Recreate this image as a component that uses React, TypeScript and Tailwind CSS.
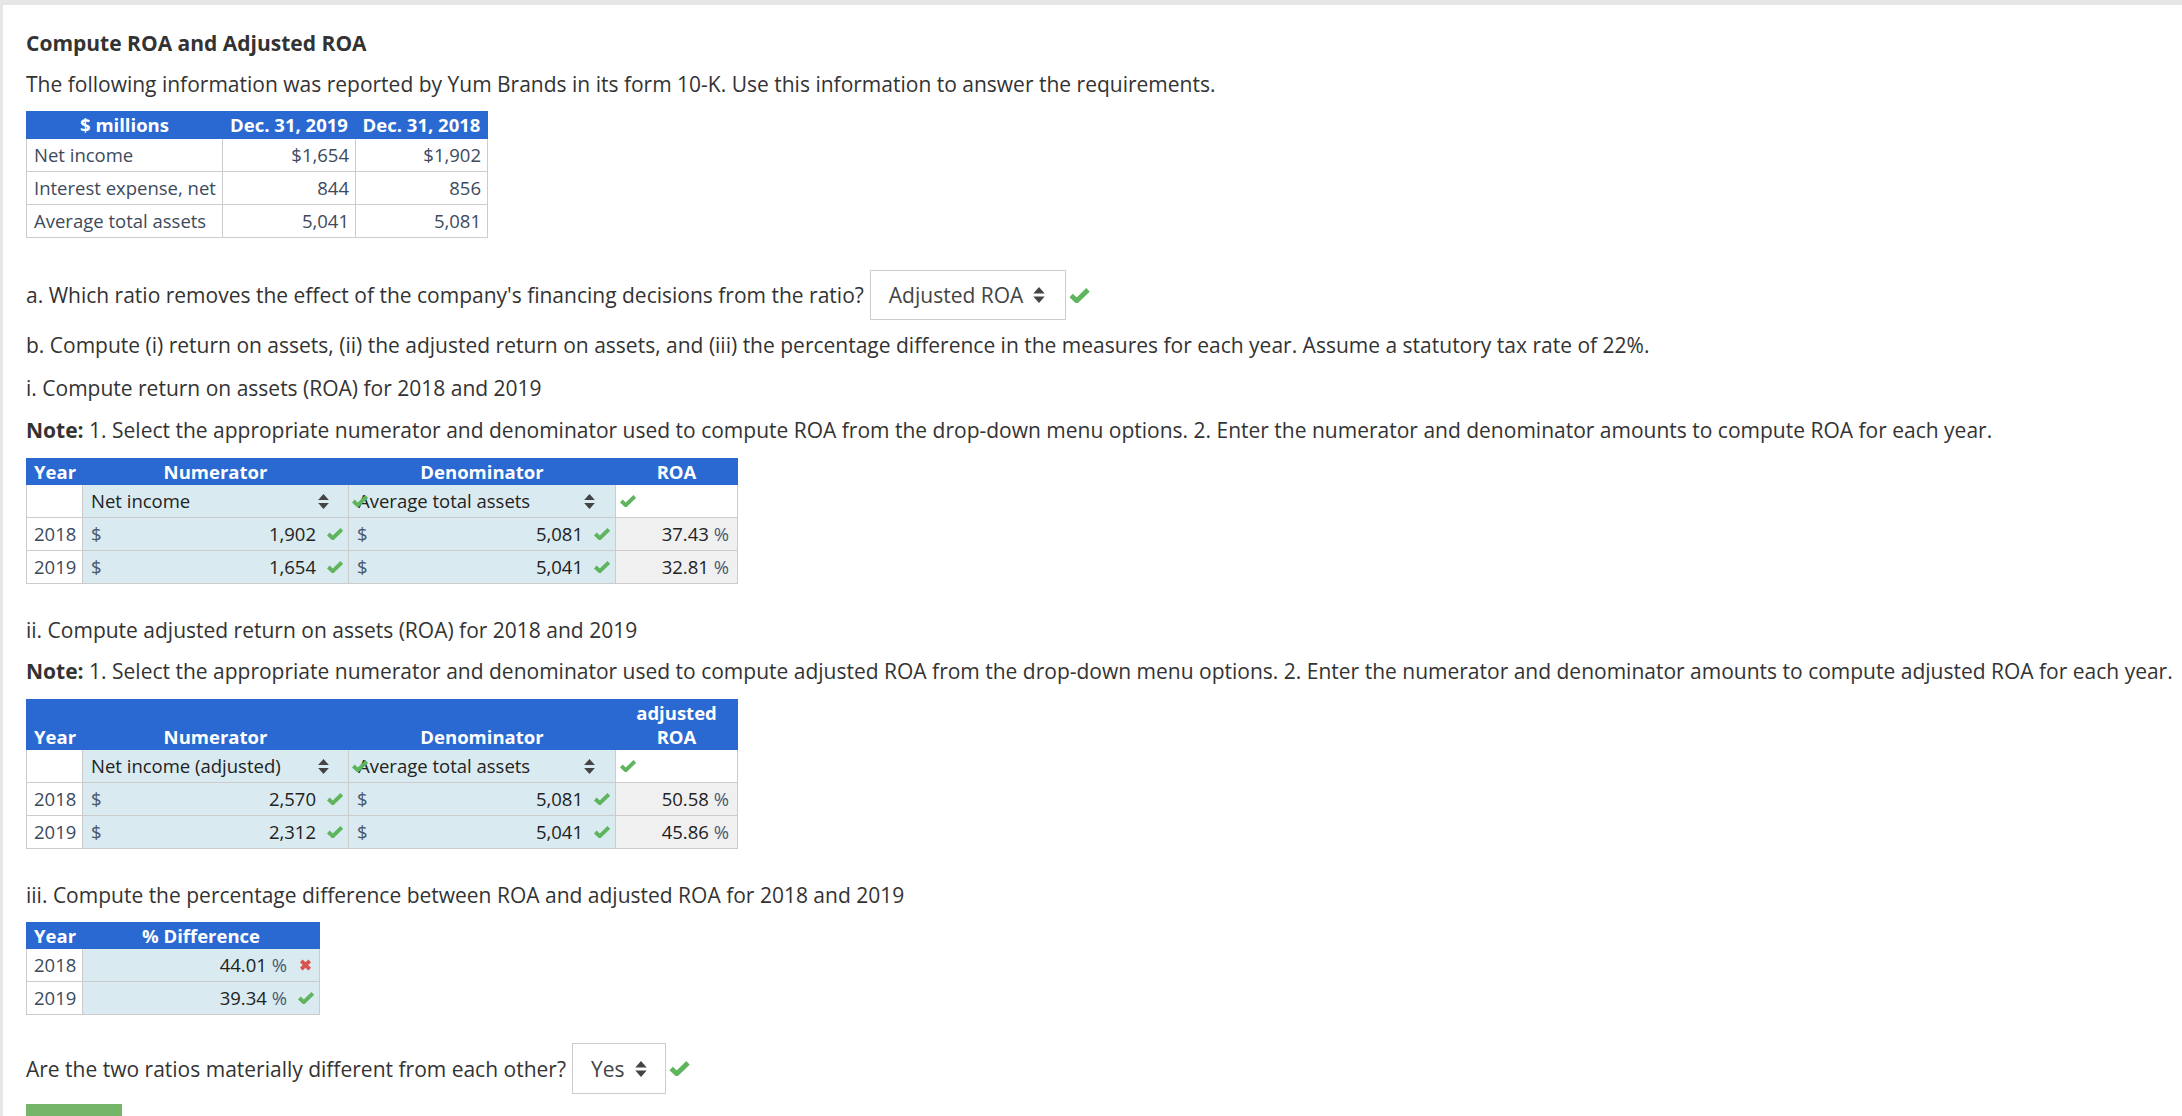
import React from 'react';

const Check: React.FC<{ className?: string }> = ({ className = '' }) => (
  <svg viewBox="0 0 16 12" className={className} fill="none">
    <path d="M1.3 6 L5.8 10.2 L14.8 1.5" stroke="#5fb55d" strokeWidth="3.9" />
  </svg>
);

const Cross: React.FC<{ className?: string }> = ({ className = '' }) => (
  <svg viewBox="0 0 12 12" className={className} fill="none">
    <path d="M1.8 1.8 L10.2 10.2 M10.2 1.8 L1.8 10.2" stroke="#d9534f" strokeWidth="3.8" />
  </svg>
);

const Arrows: React.FC<{ className?: string }> = ({ className = '' }) => (
  <svg viewBox="0 0 10 14" className={className} fill="#444">
    <path d="M5 0 L10 5.6 L0 5.6 Z" />
    <path d="M0 8.4 L10 8.4 L5 14 Z" />
  </svg>
);

const cell = 'border border-[#cccccc]';
const head = 'bg-[#2a69d1] text-white font-bold border border-[#2a69d1]';

const Dollar: React.FC<{ value: string }> = ({ value }) => (
  <div className="flex items-center pl-[8px] pr-[5px]">
    <span className="text-[#4a5568]">$</span>
    <span className="flex-1 text-right text-[#222]">{value}</span>
    <Check className="ml-[11px] w-[16px] h-[12px]" />
  </div>
);

const Pct: React.FC<{ value: string }> = ({ value }) => (
  <span className="text-[#222]">
    {value}
    <span className="text-[#4a5a70]"> %</span>
  </span>
);

type RoaRow = { year: string; num: string; den: string; roa: string };

const RoaTable: React.FC<{ numLabel: string; last: React.ReactNode; rows: RoaRow[]; tall?: boolean }> = ({ numLabel, last, rows, tall }) => (
  <table className="mt-[14px] border-collapse table-fixed w-[711px] text-[18.5px] leading-[24px] text-[#3d4a5c]">
    <colgroup>
      <col className="w-[56px]" />
      <col className="w-[266px]" />
      <col className="w-[267px]" />
      <col className="w-[122px]" />
    </colgroup>
    <thead>
      <tr className={tall ? 'h-[50px]' : 'h-[26px]'}>
        <th className={`${head} text-left pl-[7px] align-bottom`}>Year</th>
        <th className={`${head} text-center align-bottom`}>Numerator</th>
        <th className={`${head} text-center align-bottom`}>Denominator</th>
        <th className={`${head} text-center align-bottom`}>{last}</th>
      </tr>
    </thead>
    <tbody>
      <tr className="h-[33px]">
        <td className={`${cell} bg-white`}></td>
        <td className={`${cell} bg-[#d9eaf1] text-[#222]`}>
          <div className="flex items-center pl-[8px] pr-[19px]">
            <span className="flex-1">{numLabel}</span>
            <Arrows className="w-[11px] h-[15px]" />
          </div>
        </td>
        <td className={`${cell} bg-[#d9eaf1] text-[#222] relative`}>
          <Check className="absolute left-[3px] top-[10px] w-[16px] h-[12px]" />
          <div className="flex items-center pl-[9px] pr-[20px]">
            <span className="flex-1">Average total assets</span>
            <Arrows className="w-[11px] h-[15px]" />
          </div>
        </td>
        <td className={`${cell} bg-white`}>
          <Check className="ml-[4px] w-[16px] h-[12px]" />
        </td>
      </tr>
      {rows.map((r) => (
        <tr key={r.year} className="h-[33px]">
          <td className={`${cell} bg-white pl-[7px]`}>{r.year}</td>
          <td className={`${cell} bg-[#d9eaf1]`}>
            <Dollar value={r.num} />
          </td>
          <td className={`${cell} bg-[#d9eaf1]`}>
            <Dollar value={r.den} />
          </td>
          <td className={`${cell} bg-[#f0f0f0] text-right pr-[8px]`}>
            <Pct value={r.roa} />
          </td>
        </tr>
      ))}
    </tbody>
  </table>
);

export default function App() {
  return (
    <div className="min-h-screen bg-[#e6e6e6] pt-[5px] pl-[3px]">
      <div className="min-h-[1111px] bg-white pl-[23px] pt-[24px] font-['Open_Sans',sans-serif] text-[21px] leading-[28px] text-[#333]">
        <h1 className="font-bold">Compute ROA and Adjusted ROA</h1>
        <p className="mt-[13px]">
          The following information was reported by Yum Brands in its form 10-K. Use this information to answer the requirements.
        </p>

        <table className="mt-[13px] border-collapse table-fixed w-[461px] text-[18.5px] leading-[24px] text-[#3d4a5c]">
          <colgroup>
            <col className="w-[196px]" />
            <col className="w-[133px]" />
            <col className="w-[132px]" />
          </colgroup>
          <thead>
            <tr className="h-[27px]">
              <th className={`${head} text-center`}>$ millions</th>
              <th className={`${head} text-center`}>Dec. 31, 2019</th>
              <th className={`${head} text-center`}>Dec. 31, 2018</th>
            </tr>
          </thead>
          <tbody>
            {[
              ['Net income', '$1,654', '$1,902'],
              ['Interest expense, net', '844', '856'],
              ['Average total assets', '5,041', '5,081'],
            ].map((r) => (
              <tr key={r[0]} className="h-[33px]">
                <td className={`${cell} pl-[7px] whitespace-nowrap`}>{r[0]}</td>
                <td className={`${cell} text-right pr-[6px]`}>{r[1]}</td>
                <td className={`${cell} text-right pr-[6px]`}>{r[2]}</td>
              </tr>
            ))}
          </tbody>
        </table>

        <div className="mt-[32px] flex items-center">
          <span>a. Which ratio removes the effect of the company's financing decisions from the ratio?</span>
          <div className="ml-[6px] flex h-[50px] w-[196px] items-center border border-[#cccccc] pl-[18px] pr-[20px] text-[#444]">
            <span className="flex-1">Adjusted ROA</span>
            <Arrows className="w-[12px] h-[16px]" />
          </div>
          <Check className="ml-[3px] w-[21px] h-[15px]" />
        </div>

        <p className="mt-[11px]">
          b. Compute (i) return on assets, (ii) the adjusted return on assets, and (iii) the percentage difference in the measures for each year. Assume a statutory tax rate of 22%.
        </p>
        <p className="mt-[15px]">i. Compute return on assets (ROA) for 2018 and 2019</p>
        <p className="mt-[14px]">
          <span className="font-bold">Note:</span> 1. Select the appropriate numerator and denominator used to compute ROA from the drop-down menu options. 2. Enter the numerator and denominator amounts to compute ROA for each year.
        </p>

        <RoaTable
          numLabel="Net income"
          last="ROA"
          rows={[
            { year: '2018', num: '1,902', den: '5,081', roa: '37.43' },
            { year: '2019', num: '1,654', den: '5,041', roa: '32.81' },
          ]}
        />

        <p className="mt-[32px]">ii. Compute adjusted return on assets (ROA) for 2018 and 2019</p>
        <p className="mt-[13px]">
          <span className="font-bold">Note:</span> 1. Select the appropriate numerator and denominator used to compute adjusted ROA from the drop-down menu options. 2. Enter the numerator and denominator amounts to compute adjusted ROA for each year.
        </p>

        <RoaTable
          tall
          numLabel="Net income (adjusted)"
          last={
            <>
              adjusted
              <br />
              ROA
            </>
          }
          rows={[
            { year: '2018', num: '2,570', den: '5,081', roa: '50.58' },
            { year: '2019', num: '2,312', den: '5,041', roa: '45.86' },
          ]}
        />

        <p className="mt-[32px]">iii. Compute the percentage difference between ROA and adjusted ROA for 2018 and 2019</p>

        <table className="mt-[13px] border-collapse table-fixed w-[293px] text-[18.5px] leading-[24px] text-[#3d4a5c]">
          <colgroup>
            <col className="w-[56px]" />
            <col className="w-[237px]" />
          </colgroup>
          <thead>
            <tr className="h-[26px]">
              <th className={`${head} text-left pl-[7px]`}>Year</th>
              <th className={`${head} text-center`}>% Difference</th>
            </tr>
          </thead>
          <tbody>
            {[
              { year: '2018', v: '44.01', ok: false },
              { year: '2019', v: '39.34', ok: true },
            ].map((r) => (
              <tr key={r.year} className="h-[33px]">
                <td className={`${cell} bg-white pl-[7px]`}>{r.year}</td>
                <td className={`${cell} bg-[#d9eaf1]`}>
                  <div className="flex items-center justify-end pr-[5px]">
                    <Pct value={r.v} />
                    {r.ok ? (
                      <Check className="ml-[11px] w-[16px] h-[12px]" />
                    ) : (
                      <Cross className="ml-[12px] mr-[2px] w-[13px] h-[12px]" />
                    )}
                  </div>
                </td>
              </tr>
            ))}
          </tbody>
        </table>

        <div className="mt-[28px] flex items-center">
          <span>Are the two ratios materially different from each other?</span>
          <div className="ml-[6px] flex h-[51px] w-[94px] items-center border border-[#cccccc] pl-[18px] pr-[18px] text-[#444]">
            <span className="flex-1">Yes</span>
            <Arrows className="w-[12px] h-[16px]" />
          </div>
          <Check className="ml-[3px] w-[21px] h-[15px]" />
        </div>

        <div className="mt-[10px] h-[40px] w-[96px] bg-[#74b567]"></div>
      </div>
    </div>
  );
}
